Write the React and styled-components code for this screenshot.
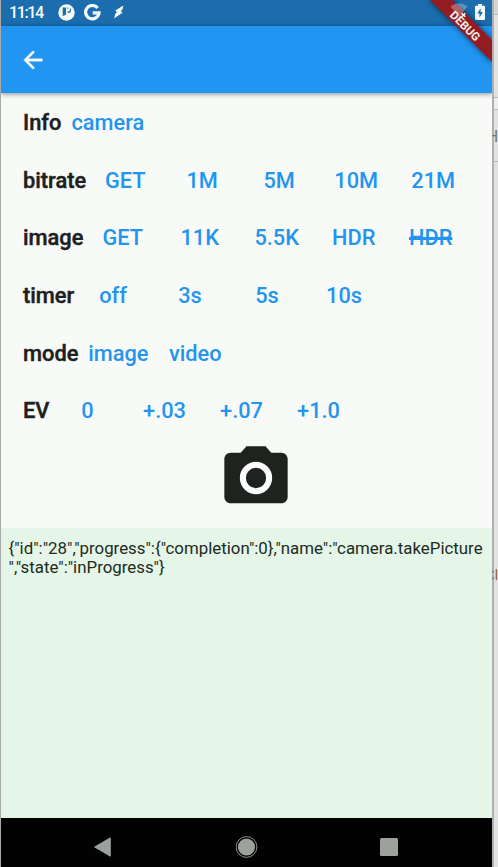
import React from "react";
import styled, { createGlobalStyle } from "styled-components";

const GlobalStyle = createGlobalStyle`
  * { box-sizing: border-box; }
  body { margin: 0; background: #e3e2e3; font-family: Roboto, sans-serif; overflow: hidden; }
`;

const Desktop = styled.div`
  display: grid;
  grid-template-columns: 494px 4px;
  width: 498px;
  height: 867px;
`;

const Phone = styled.main`
  position: relative;
  display: flex;
  flex-direction: column;
  height: 867px;
  border-left: 1px solid #aaa;
  border-right: 2px solid #b0b0b0;
  background: #f8faf8;
  overflow: hidden;
`;

const StatusBar = styled.header`
  display: flex;
  align-items: center;
  flex: 0 0 26px;
  padding: 0 7px 2px 8px;
  background: #1b6dae;
  color: #f5faf8;
`;

const Clock = styled.span`
  width: 49px;
  padding-top: 1px;
  font-size: 16.3px;
  font-weight: 500;
  letter-spacing: -1.5px;
  line-height: 22px;
`;

const StatusIcon = styled.svg`
  display: block;
  flex: none;
  width: ${(p) => p.$w}px;
  height: ${(p) => p.$h}px;
  margin-left: ${(p) => p.$gap || 0}px;
  fill: currentColor;
`;

const Spacer = styled.div`
  flex: 1;
`;

const AppBar = styled.nav`
  display: flex;
  align-items: center;
  flex: 0 0 67px;
  padding: 0 0 0 18px;
  background: #2095f1;
  box-shadow: 0 1px 5px rgba(0, 0, 0, 0.45);
  z-index: 1;
`;

const BackButton = styled.button`
  display: flex;
  padding: 0;
  border: 0;
  background: none;
  color: #f8faf8;
`;

const Controls = styled.section`
  flex: 0 0 435px;
  padding: 0.7px 0 0 22px;
`;

const Row = styled.div`
  display: flex;
  align-items: center;
  height: 57.7px;
  font-size: 21.75px;
  white-space: nowrap;
`;

const Label = styled.span`
  flex: none;
  width: ${(p) => p.$w}px;
  color: #1d211e;
  font-size: 21.85px;
  font-weight: 500;
  -webkit-text-stroke: 0.45px currentColor;
`;

const Option = styled.button`
  flex: none;
  min-width: 77px;
  padding: 0 7px;
  border: 0;
  background: none;
  color: #2395ee;
  font: inherit;
  font-weight: 500;
  text-align: center;
  text-decoration: ${(p) => (p.$off ? "line-through" : "none")};
  text-decoration-thickness: 3px;
`;

const Shutter = styled.button`
  display: flex;
  margin: 0 0 0 195px;
  padding: 0;
  border: 0;
  background: none;
  color: #1f231f;
`;

const Log = styled.pre`
  flex: 1;
  margin: 0;
  padding: 11px 7.5px;
  background: #e5f5e7;
  color: #202b22;
  font-family: Roboto, sans-serif;
  font-size: 16.85px;
  line-height: 19px;
`;

const NavBar = styled.footer`
  display: flex;
  align-items: center;
  flex: 0 0 49px;
  padding: 9px 0 0 92px;
  background: #010201;
  color: #9da19d;
`;

const NavIcon = styled.svg`
  display: block;
  width: 24px;
  height: 24px;
  margin-right: ${(p) => p.$gap}px;
  fill: currentColor;
`;

const DebugBanner = styled.svg`
  position: absolute;
  top: 0;
  right: 0;
  width: 80px;
  height: 80px;
  z-index: 2;
`;

const Behind = styled.aside`
  display: flex;
  flex-direction: column;
  width: 4px;
  font-family: "Liberation Sans", sans-serif;
`;

const Slice = styled.div`
  flex: none;
  height: ${(p) => p.$h}px;
  border-bottom: ${(p) => (p.$line ? "1px solid #bbb" : "0")};
  background: ${(p) => p.$bg || "#e3e2e3"};
`;

const EdgeText = styled.span`
  position: relative;
  display: block;
  width: 6px;
  margin-left: -2px;
  height: 100%;
  overflow: hidden;
  z-index: 3;
  color: ${(p) => p.$color};
  font-size: ${(p) => p.$size}px;
  line-height: ${(p) => p.$h}px;
  text-indent: ${(p) => p.$shift}px;
  white-space: nowrap;
`;

const Warm = styled.span`
  color: #a45d28;
`;

const rows = [
  { label: "Info", width: 41.5, options: ["camera"] },
  { label: "bitrate", width: 63.7, options: ["GET", "1M", "5M", "10M", "21M"] },
  { label: "image", width: 61.2, options: ["GET", "11K", "5.5K", "HDR", "HDR"], off: 4 },
  { label: "timer", width: 51.5, options: ["off", "3s", "5s", "10s"] },
  { label: "mode", width: 56.8, options: ["image", "video"] },
  { label: "EV", width: 26, options: ["0", "+.03", "+.07", "+1.0"] },
];

const message =
  '{"id":"28","progress":{"completion":0},"name":"camera.takePicture\n","state":"inProgress"}';

export default function App() {
  return (
    <Desktop>
      <GlobalStyle />
      <Phone>
        <StatusBar>
          <Clock>11:14</Clock>
          <StatusIcon $w={17} $h={17} viewBox="0 0 17 17">
            <circle cx="8.5" cy="8.5" r="8.2" />
            <path d="M4.7 3.6v8.6l3.4-1.8V3.6z" fill="#1b6dae" />
            <path d="M9.4 3.4h1v1.4h-1zM12 3.6q2 2.4.2 4.8L9.6 9.3V7.8q3.2-.2 2.4-4.2z" fill="#1b6dae" />
          </StatusIcon>
          <StatusIcon $w={17} $h={17} $gap={9} viewBox="0 0 17 17">
            <path
              d="M13.6 4A6.7 6.7 0 1 0 15 8.9H8.7"
              fill="none"
              stroke="currentColor"
              strokeWidth="3.2"
            />
          </StatusIcon>
          <StatusIcon $w={10} $h={14} $gap={13} viewBox="0 0 10 14">
            <path d="M9.4.4 1.3 5.6l1.6 1.3-1.6 2L0 13.4l8.8-5.9-2-1 1.6-2z" />
          </StatusIcon>
          <Spacer />
          <StatusIcon $w={10} $h={16} viewBox="0 0 10 16">
            <path d="M3 0h4v1.7h2q1 0 1 1V15q0 1-1 1H1q-1 0-1-1V2.7q0-1 1-1h2z" />
            <path d="M5.6 4.2 2.3 9.6h2.2v4L7.8 8.1H5.6z" fill="#1b6dae" />
          </StatusIcon>
        </StatusBar>
        <AppBar>
          <BackButton aria-label="Back">
            <svg width="28" height="28" viewBox="0 0 24 24" fill="currentColor" stroke="currentColor" strokeWidth="0.35">
              <path d="M20 11H7.83l5.59-5.59L12 4l-8 8 8 8 1.41-1.41L7.83 13H20v-2z" />
            </svg>
          </BackButton>
        </AppBar>
        <Controls>
          {rows.map((row) => (
            <Row key={row.label}>
              <Label $w={row.width}>{row.label}</Label>
              {row.options.map((option, i) => (
                <Option key={i} $off={row.off === i}>
                  {option}
                </Option>
              ))}
            </Row>
          ))}
          <Shutter aria-label="Take picture">
            <svg width="76" height="76" viewBox="0 0 24 24" fill="currentColor">
              <path d="M9 2 7.17 4H4c-1.1 0-2 .9-2 2v12c0 1.1.9 2 2 2h16c1.1 0 2-.9 2-2V6c0-1.1-.9-2-2-2h-3.17L15 2H9z" />
              <circle cx="12" cy="12" r="4.15" fill="none" stroke="#fdfefd" strokeWidth="1.9" />
            </svg>
          </Shutter>
        </Controls>
        <Log>{message}</Log>
        <NavBar>
          <NavIcon $gap={119} viewBox="0 0 24 24">
            <path d="M.8 12 17 2.5q.8-.4.8.5v18q0 .9-.8.5z" />
          </NavIcon>
          <NavIcon $gap={119} viewBox="0 0 24 24">
            <circle cx="10.5" cy="12" r="8.6" />
            <circle cx="10.5" cy="12" r="10.4" fill="none" stroke="currentColor" strokeWidth="0.9" />
          </NavIcon>
          <NavIcon $gap={0} viewBox="0 0 24 24">
            <rect x="1" y="3" width="18" height="18" rx="1.5" />
          </NavIcon>
        </NavBar>
        <DebugBanner viewBox="0 0 80 80">
          <defs>
            <filter id="bannerShadow" x="-30%" y="-30%" width="160%" height="160%">
              <feDropShadow dx="0" dy="0" stdDeviation="3" floodColor="#000" floodOpacity=".65" />
            </filter>
          </defs>
          <path d="M17-1h22l42 42v22z" fill="#921b20" filter="url(#bannerShadow)" />
          <path d="M38.5 6.5q8.5-6.5 17 0L47 17z" fill="#fff" opacity=".3" />
          <path d="m49.7 13.2 3.6 3.6m0-3.6-3.6 3.6" stroke="#f5faf8" strokeWidth="1.6" />
          <text
            x="53"
            y="30"
            transform="rotate(45 53 26)"
            fill="#f5efe9"
            fontFamily="Roboto, sans-serif"
            fontSize="11.6"
            fontWeight="700"
            textAnchor="middle"
          >
            DEBUG
          </text>
        </DebugBanner>
      </Phone>
      <Behind>
        <Slice $h={15} $line $bg="#d4d4d4" />
        <Slice $h={83} $line />
        <Slice $h={12} $line $bg="#eee" />
        <Slice $h={52} $line>
          <EdgeText $h={54} $size={17} $shift={-6} $color="#777">H</EdgeText>
        </Slice>
        <Slice $h={403} />
        <Slice $h={20}>
          <EdgeText $h={19} $size={15} $shift={-8} $color="#6f7478">
            C<Warm>l</Warm>
          </EdgeText>
        </Slice>
      </Behind>
    </Desktop>
  );
}
